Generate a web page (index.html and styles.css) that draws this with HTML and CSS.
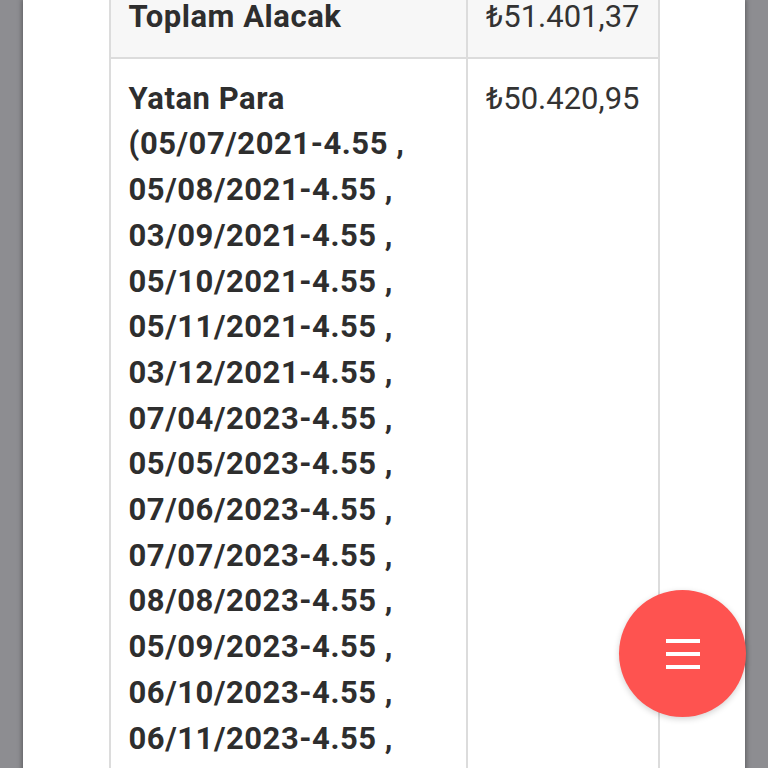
FILE: index.html
```html
<!DOCTYPE html>
<html lang="tr">
<head>
<meta charset="utf-8">
<title>Hesap Detayı</title>
<link rel="stylesheet" href="styles.css">
</head>
<body>
<div class="sheet">
  <table class="summary">
    <tbody>
      <tr class="head-row">
        <th class="label">Toplam Alacak</th>
        <td class="value">₺51.401,37</td>
      </tr>
      <tr>
        <th class="label">Yatan Para <span class="item">(05/07/2021-4.55 ,</span> <span class="item">05/08/2021-4.55 ,</span> <span class="item">03/09/2021-4.55 ,</span> <span class="item">05/10/2021-4.55 ,</span> <span class="item">05/11/2021-4.55 ,</span> <span class="item">03/12/2021-4.55 ,</span> <span class="item">07/04/2023-4.55 ,</span> <span class="item">05/05/2023-4.55 ,</span> <span class="item">07/06/2023-4.55 ,</span> <span class="item">07/07/2023-4.55 ,</span> <span class="item">08/08/2023-4.55 ,</span> <span class="item">05/09/2023-4.55 ,</span> <span class="item">06/10/2023-4.55 ,</span> <span class="item">06/11/2023-4.55 ,</span> <span class="item">05/12/2023-4.55 )</span></th>
        <td class="value">₺50.420,95</td>
      </tr>
    </tbody>
  </table>
</div>
<button class="fab" type="button" aria-label="Menü">
  <svg width="34" height="30" viewBox="0 0 34 30" aria-hidden="true">
    <rect x="0" y="0" width="34" height="4" fill="#fff"/>
    <rect x="0" y="13" width="34" height="4" fill="#fff"/>
    <rect x="0" y="26" width="34" height="4" fill="#fff"/>
  </svg>
</button>
</body>
</html>
```

FILE: styles.css
```css
html, body {
  margin: 0;
  padding: 0;
  height: 100%;
  overflow: hidden;
}

body {
  background: #8d8d91;
  font-family: Roboto, "Noto Sans", "DejaVu Sans", sans-serif;
  color: #303030;
}

.sheet {
  margin: 0 23px;
  min-height: 100%;
  background: #ffffff;
  box-shadow: 0 0 5px 1px rgba(0, 0, 0, 0.35);
  padding-top: 1px;
  box-sizing: border-box;
}

.summary {
  width: 551px;
  margin: -26px auto 0;
  border-collapse: collapse;
  font-size: 31px;
  line-height: 45.7px;
}

.summary th,
.summary td {
  border: 2px solid #dcdcdc;
  padding: 17px 18px;
  vertical-align: top;
  text-align: left;
}

.label {
  font-weight: 700;
  color: #2e2e2e;
  letter-spacing: 0.55px;
}

.item {
  white-space: nowrap;
}

.value {
  font-weight: 400;
  white-space: nowrap;
  width: 1%;
  color: #333333;
}

.head-row th,
.head-row td {
  background: #f7f7f7;
}

.fab {
  position: fixed;
  right: 22px;
  bottom: 51px;
  width: 127px;
  height: 127px;
  border: none;
  border-radius: 50%;
  background: #fe5350;
  box-shadow: 0 2px 6px rgba(0, 0, 0, 0.18);
  display: flex;
  align-items: center;
  justify-content: center;
  padding: 0;
  cursor: pointer;
}

.fab svg {
  display: block;
}
```
